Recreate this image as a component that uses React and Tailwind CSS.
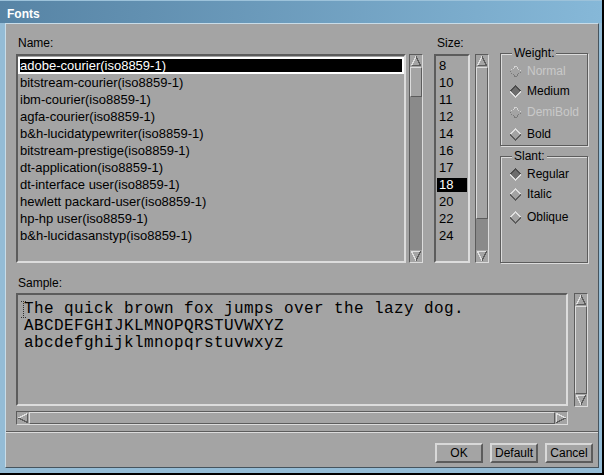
import React from "react";

const SANS = "font-['Liberation_Sans',Arial,sans-serif]";

function ArrowUp() {
  return (
    <svg width="12" height="12" shapeRendering="crispEdges" className="block shrink-0">
      <rect x="0" y="0" width="12" height="12" fill="#a4a4a4" />
      <polyline points="1.5,10.5 6,1.5" stroke="#e0e0e0" fill="none" />
      <polyline points="6,1.5 10.5,10.5 1.5,10.5" stroke="#5c5c5c" fill="none" />
    </svg>
  );
}
function ArrowDown() {
  return (
    <svg width="12" height="12" shapeRendering="crispEdges" className="block shrink-0">
      <rect x="0" y="0" width="12" height="12" fill="#a4a4a4" />
      <polyline points="10.5,1.5 1.5,1.5 6,10.5" stroke="#e0e0e0" fill="none" />
      <polyline points="6,10.5 10.5,1.5" stroke="#5c5c5c" fill="none" />
    </svg>
  );
}
function ArrowLeft() {
  return (
    <svg width="12" height="12" shapeRendering="crispEdges" className="block shrink-0">
      <rect x="0" y="0" width="12" height="12" fill="#a4a4a4" />
      <polyline points="1.5,6 10.5,1.5" stroke="#e0e0e0" fill="none" />
      <polyline points="10.5,1.5 10.5,10.5 1.5,6" stroke="#5c5c5c" fill="none" />
    </svg>
  );
}
function ArrowRight() {
  return (
    <svg width="12" height="12" shapeRendering="crispEdges" className="block shrink-0">
      <rect x="0" y="0" width="12" height="12" fill="#a4a4a4" />
      <polyline points="1.5,10.5 1.5,1.5 10.5,6" stroke="#e0e0e0" fill="none" />
      <polyline points="10.5,6 1.5,10.5" stroke="#5c5c5c" fill="none" />
    </svg>
  );
}

const THUMB =
  "border border-t-[#dcdcdc] border-l-[#dcdcdc] border-b-[#5c5c5c] border-r-[#5c5c5c] bg-[#a4a4a4]";

function VScroll({ thumb, full }) {
  return (
    <div className="w-[14px] h-full flex flex-col border border-t-[#5c5c5c] border-l-[#5c5c5c] border-r-[#dcdcdc] border-b-[#dcdcdc] bg-[#8a8a8a]">
      <ArrowUp />
      {full ? (
        <div className={`flex-1 ${THUMB}`} />
      ) : (
        <>
          <div className={`${thumb} ${THUMB}`} />
          <div className="flex-1" />
        </>
      )}
      <ArrowDown />
    </div>
  );
}

function Diamond({ state }) {
  let fill = "#a4a4a4";
  let top = "#e0e0e0";
  let bottom = "#5c5c5c";
  let dash;
  if (state === "on") {
    fill = "#6e6e6e";
    top = "#4c4c4c";
    bottom = "#e0e0e0";
  }
  if (state === "dis") {
    top = "#d4d4d4";
    bottom = "#7a7a7a";
    dash = "1 1";
  }
  return (
    <svg width="13" height="13" shapeRendering="crispEdges" className="block shrink-0">
      <polygon points="6.5,1 12,6.5 6.5,12 1,6.5" fill={fill} />
      <polyline points="1,6.5 6.5,1 12,6.5" stroke={top} strokeWidth="2" fill="none" strokeDasharray={dash} />
      <polyline points="1,6.5 6.5,12 12,6.5" stroke={bottom} strokeWidth="2" fill="none" strokeDasharray={dash} />
    </svg>
  );
}

function RadioRow({ label, state, extra }) {
  return (
    <div className={`flex items-center h-[20px] pl-[8px] gap-[5px] ${extra || ""}`}>
      <Diamond state={state} />
      <span className={state === "dis" ? "text-[#c9c9c9]" : "text-black"}>{label}</span>
    </div>
  );
}

function Group({ title, children, box }) {
  return (
    <div
      className={`relative ${box} border border-[#5c5c5c] shadow-[inset_1px_1px_0_#dcdcdc,1px_1px_0_#dcdcdc]`}
    >
      <span className="absolute left-[11px] top-[-8px] leading-[14px] px-[2px] bg-[#a4a4a4] text-black">
        {title}
      </span>
      <div className="flex flex-col pt-[7px]">{children}</div>
    </div>
  );
}

const names = [
  "adobe-courier(iso8859-1)",
  "bitstream-courier(iso8859-1)",
  "ibm-courier(iso8859-1)",
  "agfa-courier(iso8859-1)",
  "b&h-lucidatypewriter(iso8859-1)",
  "bitstream-prestige(iso8859-1)",
  "dt-application(iso8859-1)",
  "dt-interface user(iso8859-1)",
  "hewlett packard-user(iso8859-1)",
  "hp-hp user(iso8859-1)",
  "b&h-lucidasanstyp(iso8859-1)",
];
const sizes = ["8", "10", "11", "12", "14", "16", "17", "18", "20", "22", "24"];

const SUNKEN =
  "border-2 border-t-[#5c5c5c] border-l-[#5c5c5c] border-b-[#dcdcdc] border-r-[#dcdcdc]";

function Button({ children }) {
  return (
    <div className="w-[48px] h-[20px] flex items-center justify-center border-2 border-t-[#d8d8d8] border-l-[#d8d8d8] border-b-[#5c5c5c] border-r-[#5c5c5c] bg-[#a4a4a4] text-black text-[12px] leading-none">
      {children}
    </div>
  );
}

export default function App() {
  return (
    <div
      className={`${SANS} w-[604px] h-[475px] flex flex-col bg-[#94bcd6] border-r-2 border-b-2 border-black text-[12px] overflow-hidden`}
    >
      {/* Title bar */}
      <div className="h-[23px] shrink-0 flex items-start pl-[7px] pt-[6px] bg-linear-to-r from-[#5784a5] to-[#86b8d8] border-t border-t-[#9cc2da]">
        <span className="text-white font-bold text-[12px] leading-[14px]">Fonts</span>
      </div>

      {/* Content */}
      <div className="flex-1 flex flex-col ml-[5px] mr-[3px] mb-[5px] bg-[#a4a4a4] border border-t-[#c8dce8] border-l-[#c8dce8] border-r-[#46545e] border-b-[#46545e]">
        <div className="flex flex-col px-[10px] pt-[12px]">
          {/* Top row */}
          <div className="flex h-[227px]">
            {/* Name column */}
            <div className="flex flex-col w-[390px]">
              <div className="h-[18px] pl-[2px] leading-[14px] text-black">Name:</div>
              <div className={`flex-1 ${SUNKEN} pt-[1px] overflow-hidden text-[13px]`}>
                {names.map((n, i) => (
                  <div
                    key={n}
                    className={
                      i === 0
                        ? "h-[17px] flex items-center border-2 border-white bg-black text-white whitespace-nowrap"
                        : "h-[17px] flex items-center border-2 border-transparent text-black whitespace-nowrap"
                    }
                  >
                    {n}
                  </div>
                ))}
              </div>
            </div>
            <div className="ml-[3px] mt-[18px] h-[209px]">
              <VScroll thumb="h-[30px]" />
            </div>

            {/* Size column */}
            <div className="ml-[11px] flex flex-col">
              <div className="h-[18px] pl-[3px] leading-[14px] text-black">Size:</div>
              <div className="flex h-[209px]">
                <div className={`w-[36px] h-full ${SUNKEN} pt-[1px] overflow-hidden text-[13px]`}>
                  {sizes.map((s) => (
                    <div key={s} className="h-[17px] flex items-center pl-[1px] pr-[1px]">
                      <span
                        className={
                          s === "18"
                            ? "w-full h-[14px] flex items-center bg-black text-white pl-[2px]"
                            : "w-full h-[14px] flex items-center text-black pl-[2px]"
                        }
                      >
                        {s}
                      </span>
                    </div>
                  ))}
                </div>
                <div className="ml-[5px] h-full">
                  <VScroll thumb="h-[152px]" />
                </div>
              </div>
            </div>

            {/* Weight / Slant */}
            <div className="ml-[11px] w-[88px] flex flex-col">
              <div className="mt-[17px]">
                <Group title="Weight:" box="h-[93px]">
                  <RadioRow label="Normal" state="dis" />
                  <RadioRow label="Medium" state="on" />
                  <RadioRow label="DemiBold" state="dis" extra="mt-[1px]" />
                  <RadioRow label="Bold" state="off" extra="mt-[2px]" />
                </Group>
              </div>
              <div className="mt-[10px]">
                <Group title="Slant:" box="h-[107px]">
                  <RadioRow label="Regular" state="on" />
                  <RadioRow label="Italic" state="off" />
                  <RadioRow label="Oblique" state="off" extra="mt-[3px]" />
                </Group>
              </div>
            </div>
          </div>

          {/* Sample */}
          <div className="mt-[13px] h-[17px] pl-[2px] leading-[14px] text-black">Sample:</div>
          <div className="flex h-[113px]">
            <div
              className={`relative w-[552px] h-full ${SUNKEN} pl-[6px] pt-[6px] font-['Liberation_Mono','Courier_New',monospace] text-[16px] tracking-[0.4px] leading-[17px] text-black whitespace-pre overflow-hidden`}
            >
              <svg
                width="5"
                height="17"
                shapeRendering="crispEdges"
                className="absolute left-[3px] top-[6px]"
              >
                <line x1="0" y1="0.5" x2="5" y2="0.5" stroke="#303030" strokeDasharray="1 1" />
                <line x1="2.5" y1="0" x2="2.5" y2="17" stroke="#303030" strokeDasharray="1 1" />
                <line x1="0" y1="16.5" x2="5" y2="16.5" stroke="#303030" strokeDasharray="1 1" />
              </svg>
              <div>The quick brown fox jumps over the lazy dog.</div>
              <div>ABCDEFGHIJKLMNOPQRSTUVWXYZ</div>
              <div>abcdefghijklmnopqrstuvwxyz</div>
            </div>
            <div className="ml-[6px] h-[114px]">
              <VScroll full />
            </div>
          </div>

          {/* Horizontal scrollbar */}
          <div className="mt-[5px] w-[552px] h-[14px] flex border border-t-[#5c5c5c] border-l-[#5c5c5c] border-r-[#dcdcdc] border-b-[#dcdcdc] bg-[#8a8a8a]">
            <ArrowLeft />
            <div className={`flex-1 ${THUMB}`} />
            <ArrowRight />
          </div>
        </div>

        {/* Separator */}
        <div className="mt-[6px] h-[2px] border-t border-t-[#5c5c5c] border-b border-b-[#dcdcdc]" />

        {/* Buttons */}
        <div className="mt-[10px] flex justify-end gap-[7px] pr-[5px]">
          <Button>OK</Button>
          <Button>Default</Button>
          <Button>Cancel</Button>
        </div>
      </div>
    </div>
  );
}
